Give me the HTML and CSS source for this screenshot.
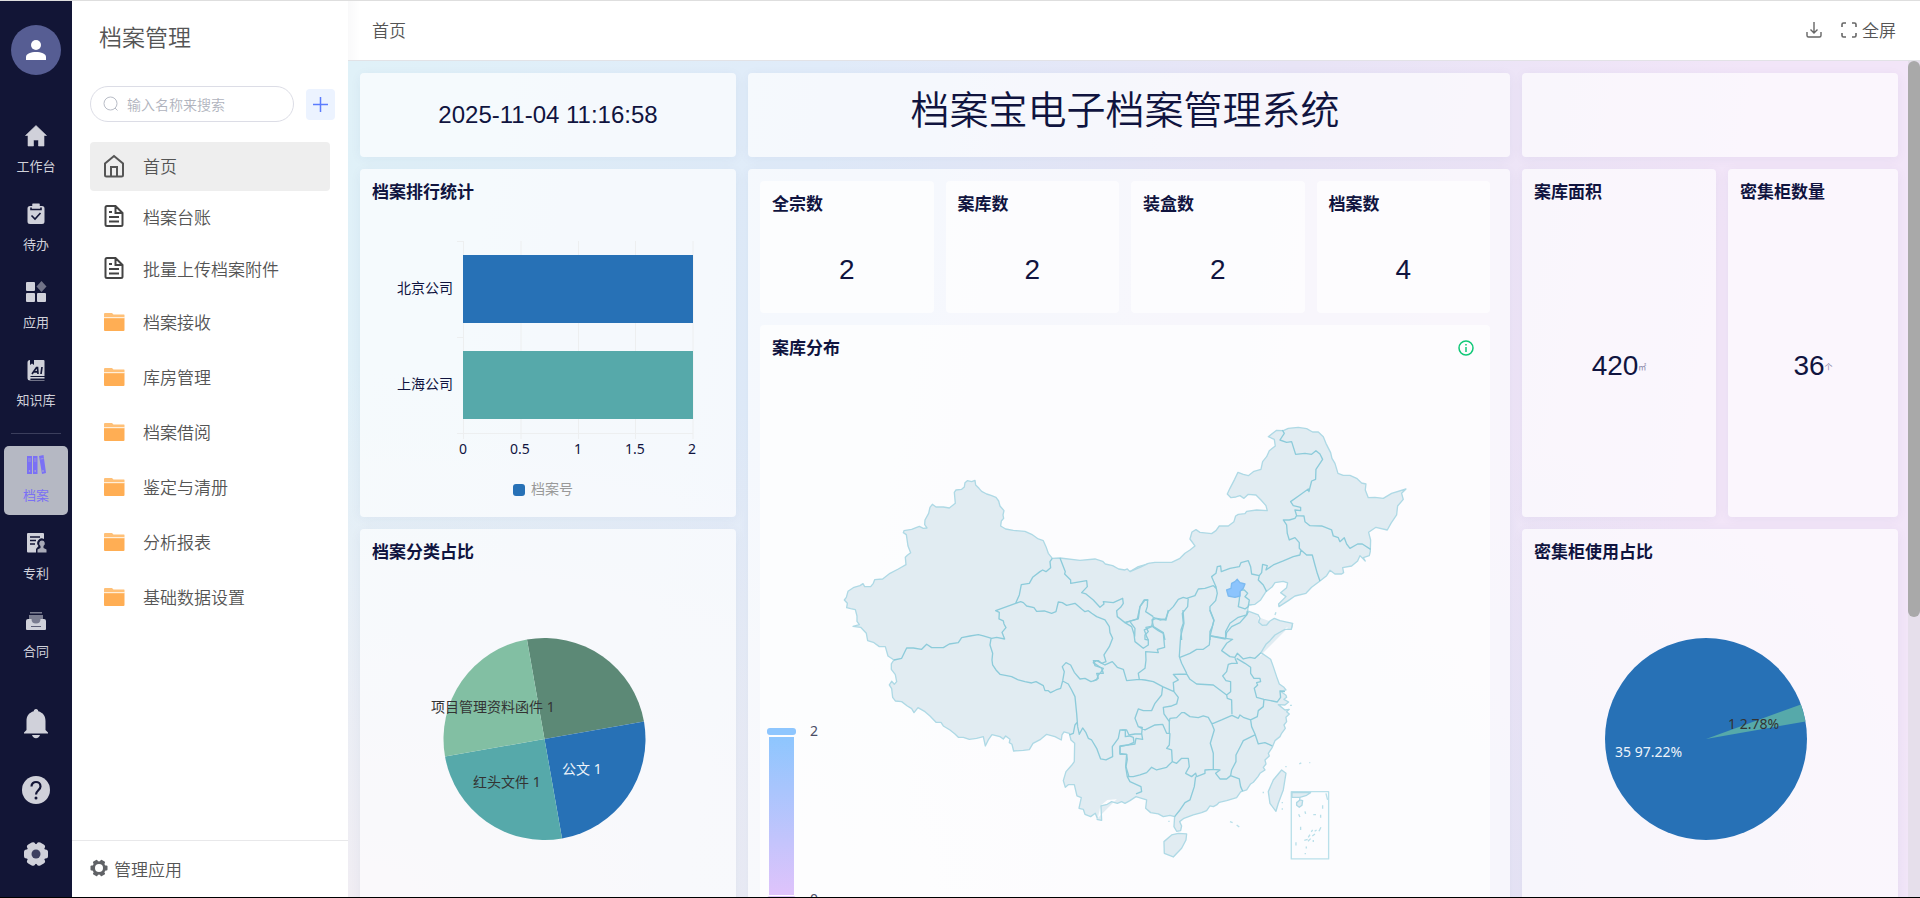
FILE: index.html
```html
<!DOCTYPE html>
<html lang="zh-CN">
<head>
<meta charset="utf-8">
<meta name="viewport" content="width=device-width, initial-scale=1">
<title>档案管理</title>
<link rel="stylesheet" href="styles.css">
</head>
<body>
<div class="app">
  <nav class="rail" aria-label="应用导航">
    <button class="avatar" type="button" aria-label="个人中心">
      <svg width="20" height="20" viewBox="0 0 20 20" fill="#fff"><circle cx="10" cy="5" r="5"/><path d="M0 20v-3c0-3.500 5-5 10-5s10 1.500 10 5v3z"/></svg>
    </button>
    <div class="rail-group">
      <a class="rail-item" href="#"><svg width="22" height="22" viewBox="0 0 22 22" fill="currentColor"><path d="M11 0.500 21.500 10.500H19V21h-5.500v-6h-5v6H3V10.500H0.500z" stroke="currentColor" stroke-linejoin="round" stroke-width=".6"/></svg><span>工作台</span></a>
      <a class="rail-item" href="#"><svg width="22" height="22" viewBox="0 0 22 22" fill="currentColor"><path d="M7.500 0.500h7V3H17a2.500 2.500 0 0 1 2.500 2.500V18.500A2.500 2.500 0 0 1 17 21H5a2.500 2.500 0 0 1-2.500-2.500V5.500A2.500 2.500 0 0 1 5 3h2.500z"/><path d="M6 4.500V6.500h10V4.500M6.500 12.500l3.500 3.500 5.500-6" fill="none" stroke="#121536" stroke-width="1.600"/><path d="M7.500 1h7v4h-7z"/></svg><span>待办</span></a>
      <a class="rail-item" href="#"><svg width="22" height="22" viewBox="0 0 22 22" fill="currentColor"><rect x="1" y="1" width="9" height="9" rx="1"/><rect x="1" y="12" width="9" height="9" rx="1"/><rect x="12" y="12" width="9" height="9" rx="1"/><path d="m16.500 0 5 5.500-5 5.500-5-5.500z" opacity=".5"/></svg><span>应用</span></a>
      <a class="rail-item" href="#"><svg width="22" height="22" viewBox="0 0 22 22" fill="currentColor"><path d="M5 1v5l2-1.500L9 6V1h9.500a1 1 0 0 1 1 1v15H5.500v1h14v1.500H5.500a1.500 1.500 0 0 0 0 1.500h14v.5H5a2.500 2.500 0 0 1-2.500-2.500V3.500A2.500 2.500 0 0 1 5 1z"/><path d="m7 15 4.500-6.500h1l.5 6.500M9 12.800h3.500M17 8l-1 7" fill="none" stroke="#121536" stroke-width="1.700"/></svg><span>知识库</span></a>
    </div>
    <hr class="rail-line">
    <div class="rail-group">
      <a class="rail-item rail-item-active" href="#" aria-current="page"><svg width="22" height="22" viewBox="0 0 22 22" fill="currentColor"><path d="M2 2h5v18H2zM8 2h4.500v18H8zM14 2l4.500-1 2.500 18-4 1z"/><path d="M3 5h3M9 5h2.500M15.500 5l3-.5M3 7h3M9 7h2.500" stroke="#b5b8c3" stroke-width=".6"/><circle cx="4.500" cy="17" r=".8" fill="#b5b8c3"/><circle cx="10.200" cy="17" r=".8" fill="#b5b8c3"/><circle cx="18" cy="17" r=".8" fill="#b5b8c3"/></svg><span>档案</span></a>
      <a class="rail-item" href="#"><svg width="22" height="22" viewBox="0 0 22 22" fill="currentColor"><path d="M3 1h15a1 1 0 0 1 1 1v5a4.500 4.500 0 0 0-5.500 7L11 17v3.500H3a1 1 0 0 1-1-1V2a1 1 0 0 1 1-1z"/><path d="M5 5h10M5 8.500h6M5 12h5" stroke="#121536" stroke-width="1.500"/><path d="M17 8.500a3 3 0 0 1 1.500 5.500v2l3 1.500v3H12.500v-3l3-1.500v-2A3 3 0 0 1 17 8.500z" opacity=".8"/></svg><span>专利</span></a>
      <a class="rail-item" href="#"><svg width="22" height="22" viewBox="0 0 22 22" fill="currentColor"><path d="M5 2h12v1.500H5zM4 5h14v9H4z" opacity=".55"/><path d="M3 9h3.500c0 3 1.500 4.500 4.500 4.500s4.500-1.500 4.500-4.500H19a2 2 0 0 1 2 2v8a1 1 0 0 1-1 1H2a1 1 0 0 1-1-1v-8a2 2 0 0 1 2-2z"/><path d="M6 16.500h10" stroke="#121536" opacity=".6"/></svg><span>合同</span></a>
    </div>
    <div class="rail-tools">
      <button type="button" aria-label="通知"><svg width="26" height="30" viewBox="0 0 26 30" fill="currentColor"><path d="M13 0c1.500 0 2.200 1 2.200 2.200C20 3.500 22.500 7 22.500 12v9l2.500 2.500v1H1v-1L3.500 21v-9C3.500 7 6 3.500 10.800 2.200 10.800 1 11.500 0 13 0zM9 26h8c-.5 2-2 3.200-4 3.200S9.500 28 9 26z"/></svg></button>
      <button type="button" aria-label="帮助"><svg width="28" height="28" viewBox="0 0 28 28"><circle cx="14" cy="14" r="14" fill="currentColor"/><path d="M9.500 10.500c0-6 9-6 9 0 0 3.500-4.500 4-4.500 8" fill="none" stroke="#121536" stroke-width="2.200"/><circle cx="14" cy="22" r="1.500" fill="#121536"/></svg></button>
      <button type="button" aria-label="设置"><svg width="26" height="26" viewBox="0 0 26 26" fill="currentColor"><circle cx="13" cy="13" r="10"/><rect x="1" y="8.500" width="24" height="9" rx="2.500"/><rect x="1" y="8.500" width="24" height="9" rx="2.500" transform="rotate(60 13 13)"/><rect x="1" y="8.500" width="24" height="9" rx="2.500" transform="rotate(120 13 13)"/><circle cx="13" cy="13" r="4.500" fill="#3d4060"/></svg></button>
    </div>
  </nav>

  <aside class="side">
    <h1 class="side-title">档案管理</h1>
    <div class="side-search">
      <label class="search-box">
        <svg width="16" height="16" viewBox="0 0 16 16" fill="none" stroke="#b9bdc7"><circle cx="7.500" cy="7.500" r="6.500"/><path d="m12 12 2.500 2.500"/></svg>
        <input type="text" placeholder="输入名称来搜索" aria-label="输入名称来搜索">
      </label>
      <button class="add" type="button" aria-label="新增"><svg width="15" height="15" viewBox="0 0 15 15" stroke="#5b7cfd" stroke-width="1.500"><path d="M7.500 0v15M0 7.500h15"/></svg></button>
    </div>
    <ul class="menu">
      <li><a class="menu-item menu-active" href="#" aria-current="page"><svg width="22" height="24" viewBox="0 0 22 24" fill="none" stroke="#555" stroke-width="2"><path d="M2 9.500 11 2l9 7.500V21a1.500 1.500 0 0 1-1.500 1.500h-15A1.500 1.500 0 0 1 2 21zM8 22v-9h6v9"/></svg>首页</a></li>
      <li><a class="menu-item" href="#"><svg width="22" height="24" viewBox="0 0 22 24" fill="none" stroke="#444" stroke-width="2"><path d="M12.500 2H4a1.500 1.500 0 0 0-1.500 1.500v17A1.500 1.500 0 0 0 4 22h14a1.500 1.500 0 0 0 1.500-1.500V9zM12.500 2v7h7M6 8h3M6 13h10M6 17.500h10"/></svg>档案台账</a></li>
      <li><a class="menu-item" href="#"><svg width="22" height="24" viewBox="0 0 22 24" fill="none" stroke="#444" stroke-width="2"><path d="M12.500 2H4a1.500 1.500 0 0 0-1.500 1.500v17A1.500 1.500 0 0 0 4 22h14a1.500 1.500 0 0 0 1.500-1.500V9zM12.500 2v7h7M6 8h3M6 13h10M6 17.500h10"/></svg>批量上传档案附件</a></li>
      <li><a class="menu-item menu-folder" href="#"><svg width="22" height="20" viewBox="0 0 22 20"><path d="M1 5.500V2a1 1 0 0 1 1-1h7l1.500 1.500H21q.500 0 .500.500v2.500z" fill="#ffc077"/><path d="M1 6h20.500v12a1 1 0 0 1-1 1H2a1 1 0 0 1-1-1z" fill="#ffae54"/><path d="M1 5.700h20.500" stroke="#fff2e0"/></svg>档案接收</a></li>
      <li><a class="menu-item menu-folder" href="#"><svg width="22" height="20" viewBox="0 0 22 20"><path d="M1 5.500V2a1 1 0 0 1 1-1h7l1.500 1.500H21q.500 0 .500.500v2.500z" fill="#ffc077"/><path d="M1 6h20.500v12a1 1 0 0 1-1 1H2a1 1 0 0 1-1-1z" fill="#ffae54"/><path d="M1 5.700h20.500" stroke="#fff2e0"/></svg>库房管理</a></li>
      <li><a class="menu-item menu-folder" href="#"><svg width="22" height="20" viewBox="0 0 22 20"><path d="M1 5.500V2a1 1 0 0 1 1-1h7l1.500 1.500H21q.500 0 .500.500v2.500z" fill="#ffc077"/><path d="M1 6h20.500v12a1 1 0 0 1-1 1H2a1 1 0 0 1-1-1z" fill="#ffae54"/><path d="M1 5.700h20.500" stroke="#fff2e0"/></svg>档案借阅</a></li>
      <li><a class="menu-item menu-folder" href="#"><svg width="22" height="20" viewBox="0 0 22 20"><path d="M1 5.500V2a1 1 0 0 1 1-1h7l1.500 1.500H21q.500 0 .500.500v2.500z" fill="#ffc077"/><path d="M1 6h20.500v12a1 1 0 0 1-1 1H2a1 1 0 0 1-1-1z" fill="#ffae54"/><path d="M1 5.700h20.500" stroke="#fff2e0"/></svg>鉴定与清册</a></li>
      <li><a class="menu-item menu-folder" href="#"><svg width="22" height="20" viewBox="0 0 22 20"><path d="M1 5.500V2a1 1 0 0 1 1-1h7l1.500 1.500H21q.500 0 .500.500v2.500z" fill="#ffc077"/><path d="M1 6h20.500v12a1 1 0 0 1-1 1H2a1 1 0 0 1-1-1z" fill="#ffae54"/><path d="M1 5.700h20.500" stroke="#fff2e0"/></svg>分析报表</a></li>
      <li><a class="menu-item menu-folder" href="#"><svg width="22" height="20" viewBox="0 0 22 20"><path d="M1 5.500V2a1 1 0 0 1 1-1h7l1.500 1.500H21q.500 0 .500.500v2.500z" fill="#ffc077"/><path d="M1 6h20.500v12a1 1 0 0 1-1 1H2a1 1 0 0 1-1-1z" fill="#ffae54"/><path d="M1 5.700h20.500" stroke="#fff2e0"/></svg>基础数据设置</a></li>
    </ul>
    <button class="side-foot" type="button"><svg width="18" height="18" viewBox="0 0 18 18" fill="#606266"><circle cx="9" cy="9" r="6.800"/><rect x=".5" y="6.500" width="17" height="5" rx="1"/><rect x=".5" y="6.500" width="17" height="5" rx="1" transform="rotate(60 9 9)"/><rect x=".5" y="6.500" width="17" height="5" rx="1" transform="rotate(120 9 9)"/><circle cx="9" cy="9" r="4" fill="#fff"/></svg>管理应用</button>
  </aside>

  <main class="main">
    <header class="topbar">
      <span class="crumb">首页</span>
      <div class="top-tools">
        <button type="button" aria-label="下载"><svg width="16" height="16" viewBox="0 0 16 16" fill="none" stroke="#666" stroke-width="1.400"><path d="M8 0v11M4.500 7.500 8 11l3.500-3.500M1 10v3.500q0 1.500 1.500 1.500h11q1.500 0 1.500-1.500V10"/></svg></button>
        <button type="button"><svg width="16" height="16" viewBox="0 0 16 16" fill="none" stroke="#666" stroke-width="1.600"><path d="M1 5V2.500Q1 1 2.500 1H5M11 1h2.500Q15 1 15 2.500V5M15 11v2.500q0 1.500-1.500 1.500H11M5 15H2.500Q1 15 1 13.500V11"/></svg>全屏</button>
      </div>
    </header>
    <div class="viewport">
      <div class="board">
        <section class="card center"><time class="clock" datetime="2025-11-04T11:16:58">2025-11-04 11:16:58</time></section>
        <section class="card banner"><h2>档案宝电子档案管理系统</h2></section>
        <section class="card"></section>

        <section class="card">
          <h3>档案排行统计</h3>
          <svg class="chart" viewBox="360 215 376 302" role="img" aria-label="档案排行统计">
            <path d="M463.500 241v198M521 241v198M578.500 241v198M635.500 241v198M693 241v198M457 241.500h6.500M457 337.500h6.500M457 433.500h236" fill="none" stroke="#edeff0"/>
            <rect x="463" y="255" width="230" height="68" fill="#2771b6"/>
            <rect x="463" y="351" width="230" height="68" fill="#56a9aa"/>
            <g class="axis" text-anchor="end"><text x="453" y="293">北京公司</text><text x="453" y="389">上海公司</text></g>
            <g class="axis" text-anchor="middle"><text x="463" y="454">0</text><text x="520" y="454">0.5</text><text x="578" y="454">1</text><text x="635" y="454">1.5</text><text x="692" y="454">2</text></g>
            <rect x="513" y="484" width="12" height="12" rx="3" fill="#2771b6"/>
            <text class="legend" x="531" y="494">档案号</text>
          </svg>
        </section>

        <section class="card middle">
          <div class="stats">
            <div class="card stat"><h3>全宗数</h3><p class="number">2</p></div>
            <div class="card stat"><h3>案库数</h3><p class="number">2</p></div>
            <div class="card stat"><h3>装盒数</h3><p class="number">2</p></div>
            <div class="card stat"><h3>档案数</h3><p class="number">4</p></div>
          </div>
          <div class="card map-card">
            <div class="map-head">
              <h3>案库分布</h3>
              <button type="button" aria-label="说明"><svg width="16" height="16" viewBox="0 0 16 16" fill="none" stroke="#10c877" stroke-width="1.500"><circle cx="8" cy="8" r="7"/><path d="M8 7v5M8 4v1.500"/></svg></button>
            </div>
            <svg class="chart" viewBox="760 371 730 537" role="img" aria-label="案库分布">
              <defs><linearGradient id="scale" x1="0" y1="0" x2="0" y2="1"><stop offset="0" stop-color="#8ec6fe"/><stop offset="1" stop-color="#dfc3fb"/></linearGradient></defs>
              <g transform="translate(830 420) scale(.3333)" stroke-linejoin="round">
                <path class="fill" d="M806 1190 811 1162 700 850 900 470 960 445 1200 480 1280 550 1255 560 1253 575 1283 588 1290 608 1300 618 1333 597 1380 615 1335 648 1293 695 1200 1000 1000 1125 832 1140 813 1156z"/>
                <path class="land" d="M960 430 925 440 900 455 892 447 885 450 866 447 848 437 826 432 818 424 795 417 750 421 690 414 667 415 655 400 648 380 640 362 625 357 605 343 585 334 550 331 527 327 512 318 514 303 521 295 519 285 522 272 510 258 506 243 498 232 483 226 470 222 455 214 447 205 437 195 435 181 425 185 412 182 405 188 403 201 395 208 378 210 373 217 376 250 358 264 340 261 318 261 307 253 300 262 296 280 285 300 284 314 291 324 280 325 268 319 245 328 222 332 220 338 229 344 234 378 242 398 232 406 226 412 228 434 205 447 180 460 158 477 134 479 130 490 122 500 104 500 99 491 90 497 72 502 54 514 49 532 43 540 52 550 50 563 62 566 76 569 81 588 81 604 88 614 69 619 92 622 109 640 113 662 130 667 148 680 166 680 174 708 192 720 184 732 184 748 196 764 200 785 193 793 185 784 178 795 185 806 188 832 196 843 215 845 232 858 245 866 252 878 264 863 285 875 300 888 318 907 333 907 340 918 360 930 375 942 385 952 400 952 418 958 440 955 460 950 466 978 476 958 486 944 510 950 520 957 527 948 540 958 538 968 546 973 551 993 580 991 598 989 609 970 632 958 650 943 675 950 694 960 696 945 702 936 718 940 723 960 734 970 733 1025 725 1036 708 1055 700 1082 706 1102 715 1094 733 1094 741 1128 754 1133 747 1165 760 1168 765 1183 782 1190 796 1180 803 1198"/>
                <g transform="translate(900 -30)">
                  <path class="land" d="M0 485 30 472 55 460 75 457 125 457 150 445 165 430 180 420 195 408 180 387 186 366 198 359 210 367 245 371 258 362 268 348 295 348 312 335 317 318 325 313 345 311 350 304 380 300 412 302 408 287 393 270 378 255 355 253 342 265 330 257 318 261 303 263 292 252 300 235 314 208 324 187 340 193 355 197 372 184 393 178 398 155 410 140 418 122 436 108 433 88 415 80 440 61 460 62 475 55 505 52 530 56 548 66 565 66 580 80 588 100 602 128 606 145 615 160 624 190 640 196 660 196 680 205 695 219 708 222 706 240 715 263 735 262 760 265 785 250 828 237 815 250 820 268 803 288 800 315 783 340 772 360 738 352 716 367 722 390 721 425 718 437 700 443 706 453 690 437 683 453 665 468 638 473 641 488 635 492 615 492 600 481 590 497 570 513 545 532 528 550 495 558 475 572 447 590 446 582 468 560 452 548 470 533 473 519 460 514 435 518 427 530 408 545 392 570 375 583 355 585 353 603 385 615 390 625 386 637 397 646 410 645 420 633 433 625 450 632 488 640 484 657"/>
                </g>
                <g transform="translate(600 570)">
                  <path class="land" d="M788 40 784 58 765 58 735 75 720 92 708 103 693 128 722 148 730 170 740 200 748 222 762 232 768 240 752 244 768 256 770 262 762 268 776 276 765 285 745 284 765 300 778 298 770 305 778 312 768 322 770 335 762 345 766 355 755 370 750 380 735 392 727 412 715 430 718 438 705 450 708 462 700 472 705 480 690 490 684 500 670 517 662 522 650 540 632 546 620 563 590 572 568 577 560 585 550 590 540 588 530 602 515 608 490 615 462 625 449 635 455 648 452 662 440 664 432 650 434 620 420 616 400 620 385 612 362 608 347 595 350 570 335 565 318 560 300 572 285 580 275 575 262 580 245 575 232 583 213 588 215 631 200 628"/>
                  <path class="land" d="M470 672 468 690 455 715 430 741 403 730 402 695 425 675 445 670zM755 480 768 490 760 540 745 580 738 604 720 580 715 545 730 510z"/>
                </g>
                <path class="line" d="M667 415 660 425 662 443 648 455 638 450 630 455 608 472 598 490 574 494 568 525 557 550 497 572 508 577 507 597 520 603 522 612 528 623 516 637 524 657 500 652 485 655 460 648 445 644 420 648 395 653 385 668 358 672 340 683 305 683 290 673 275 688 250 684 230 684 215 715 192 720M557 550 572 545 580 548 590 558 612 563 620 574 643 573 665 580 678 575 685 546 697 548 710 556 735 550 755 567 765 575 775 572 785 580 800 590 825 600 838 620 840 638 848 655 838 680 822 705 828 725 815 730 805 722 790 722 795 737 820 745 812 758 805 765 800 780 783 785 765 775 750 777 733 757 722 735 708 728 697 740 703 755 698 783M483 657 480 675 488 700 486 720 488 735 498 750 510 763 530 767 545 770 565 780 585 785 605 789 618 785 640 797 645 812 655 812 662 818 678 810 692 805 698 783 715 792 725 810 735 830 740 880 743 920M743 905 735 915 730 940 718 945M743 920 748 943 758 924 768 938 775 955 785 960 800 985 812 1017 828 1020 848 1010 847 980 865 955 870 930 886 930 886 950 898 948 910 952 912 967 895 975 870 980 870 1003 890 1003 892 1018 888 1040 897 1070M690 414 706 455 704 462 722 480 722 490 770 482 772 500 755 518 768 522 790 540 810 562 822 552 820 545 850 548 878 535 880 550 872 562 860 572 862 590 885 608 925 597 930 560 945 540 955 540"/>
                <g class="line" transform="translate(900 -30)">
                  <path d="M-15 638 22 627 30 590 42 570 53 570 52 590 47 605 70 620M0 635 15 655 14 680M70 622 65 650 43 660 50 680 55 690M68 648 100 668 105 690M175 562 173 590 157 610 160 640 153 660 155 690M70 622 90 630 107 627 115 605 130 590 145 568 160 562 170 565 195 557 205 537 225 535 250 527 258 535M258 530 262 550 257 572 240 590 240 602 252 632 247 650 240 665 240 690M258 530 245 500 258 490 262 470 272 468 274 485 300 475 328 470 333 458 355 452 362 470 365 492 388 497 395 488 398 463 412 467 408 480 430 465 460 453 490 440 510 435 513 420 530 435 547 435 555 465 562 490 570 513M388 497 385 510 400 525 410 545M352 603 350 615 325 622 300 640 287 665 287 685 240 677M330 545 328 570 325 590 345 597 355 590 358 570 345 560 353 550 343 540 330 540M513 420 508 415 508 398 495 383 478 390 472 370 470 345 460 330 478 330 495 325 500 317 522 318 525 335 540 347 575 348 605 360 610 378 625 383 630 395 643 383 650 402 660 415 683 402 697 402 722 418M500 317 495 300 512 302 512 292 490 287 482 275 510 255 535 237 537 245 545 213 557 208 558 178 578 148 570 132 558 122 545 133 525 130 497 133 485 95 470 97 450 90 463 70 457 60"/>
                  <path class="hot" d="m322 508 8 10 15 4-5 13-10 10v13l-15 4-20-4-5-18 13-5 2-15 10-5z"/>
                </g>
                <path class="line" transform="translate(600 570)" d="M285 38 305 50 312 72 315 95 340 115 355 105 355 90 345 88 345 75 355 65 348 52 370 48 366 30 380 25 408 30 415 0M368 50 385 62 400 70 404 112 382 118 385 128 347 125 348 150 345 175 325 190 328 208M459 0 462 40 452 80 448 140 455 160 470 190M540 0 552 30 541 75 538 105 520 118 500 118 480 130 450 142M587 85 608 88 590 100 575 122 600 140 615 142 622 130 640 147 660 142 675 145 693 128M587 85 590 68 605 50 630 38 650 15 655 5M541 78 587 87M615 145 622 160 605 160 595 163 590 185 578 198 588 212 602 215 602 245 590 255 570 240 550 225 500 222 480 208 470 192 430 193 445 210 430 218 432 245 445 262 440 282 425 288 400 292 402 312 418 335 420 325 440 323 455 308 463 308 480 320 505 323 520 318 535 322 545 340 550 340 575 330 606 316M590 255 592 265 605 270 606 313M620 145 645 160 662 172 662 190 672 205 690 205 692 215 680 218 683 225 673 235 680 262 702 268 742 276 752 262 750 243 765 245M702 268 700 290 685 302 682 320 662 330 640 322 630 315 625 325 606 316M662 330 665 350 675 372 685 402 705 398 727 408M675 375 640 392 632 408 618 435 618 455 605 480 602 497 628 507 632 530 638 543M602 497 590 507 570 507 557 490 570 480 550 478 550 430 541 400 553 360 545 340M432 245 398 230 370 215 345 210 328 208 290 212 280 178 262 172 247 155 225 165 200 152 190 158 215 175 220 190 200 190 205 205 190 213M398 230 395 255 375 280 365 302 340 302 325 297 315 325 325 350 345 360 375 345 398 343 410 370 418 370 418 335M325 350 337 352 335 372 315 372 297 375 290 360 275 360M420 370 418 405 410 415 425 420 427 455 410 472 380 480 365 472 350 488 330 495 310 500 292 500 287 470 290 433 270 430 270 408 315 402 318 385 338 388 335 370M292 500 300 515 333 530 335 545 318 552M427 455 440 460 455 445 475 445 478 470 467 490 485 500 497 490 500 500 525 490 525 480 550 478M497 500 493 530 480 570 465 578 450 600 434 620"/>
                <g transform="translate(600 570)">
                  <rect class="inset" x="784" y="545" width="112" height="202"/>
                  <path class="land" d="m786 547 56 1-12 8-20 6h-24zM800 578l10-8 8 2-2 14-8 6-8-6zM810 562l-1 8"/>
                  <path class="isles" d="M878 586v10M872 614v9M806 613l4 8M812 650v10M873 652l-6 12M848 660l-4 6M855 672l-8 6M840 674l-5 8M833 688l-10 3M850 690v6M842 686l-8 8M798 697v10M829 710v6M826 729v4M860 660l-6 4M825 604l2 8M850 614h8M888 550l5 20M600 635l8 3M620 645l8 6M755 597h4M755 578h4M700 545v5M808 462l6-3M838 458h3M415 634h4M735 15l3-8M766 470h4M780 286h6"/>
                </g>
              </g>
              <rect x="767" y="728" width="29" height="7" rx="3" fill="#8ec6fe"/>
              <rect x="769" y="737" width="25" height="158" fill="url(#scale)"/>
              <rect x="767" y="896" width="29" height="7" rx="3" fill="#dfc3fb"/>
              <text class="tick" x="810" y="736">2</text><text class="tick" x="810" y="904">0</text>
            </svg>
          </div>
        </section>

        <div class="pair">
          <section class="card stat area"><h3>案库面积</h3><p class="number">420<small>㎡</small></p></section>
          <section class="card stat cabinets"><h3>密集柜数量</h3><p class="number">36<small>个</small></p></section>
        </div>

        <section class="card">
          <h3>档案分类占比</h3>
          <svg class="chart" viewBox="360 575 376 328" role="img" aria-label="档案分类占比">
            <path d="M544.500 739 526.960 639.530A101 101 0 0 1 643.970 721.460z" fill="#5c8976"/>
            <path d="M544.500 739 643.970 721.460A101 101 0 0 1 562.040 838.470z" fill="#2771b6"/>
            <path d="M544.500 739 562.040 838.470A101 101 0 0 1 445.030 756.540z" fill="#56a9aa"/>
            <path d="M544.500 739 445.030 756.540A101 101 0 0 1 526.960 639.530z" fill="#82bfa3"/>
            <text class="pie-dark" x="431" y="712">项目管理资料函件 1</text>
            <text class="pie-light" x="562" y="774">公文 1</text>
            <text class="pie-dark" x="473" y="787">红头文件 1</text>
          </svg>
        </section>

        <section class="card">
          <h3>密集柜使用占比</h3>
          <svg class="chart" viewBox="1522 575 376 328" role="img" aria-label="密集柜使用占比">
            <circle cx="1706" cy="739" r="101" fill="#2771b6"/>
            <path d="M1706 739 1800.910 704.460A101 101 0 0 1 1805.470 721.460z" fill="#56a9aa"/>
            <text class="pie-dark" x="1728" y="729">1 2.78%</text>
            <text class="pie-light" x="1615" y="757">35 97.22%</text>
          </svg>
        </section>
      </div>
      <div class="scroll-track" aria-hidden="true"><div class="scroll-thumb"></div></div>
    </div>
  </main>
</div>
</body>
</html>
```
FILE: styles.css
```css
* { box-sizing: border-box; }

body {
  margin: 0;
  font-family: "Noto Sans", "Noto Sans CJK SC", sans-serif;
  font-weight: 350;
  color: #555;
}

h1, h2, h3, p, ul { margin: 0; padding: 0; }
ul { list-style: none; }
a { color: inherit; text-decoration: none; }
button { padding: 0; border: 0; background: none; font: inherit; color: inherit; }
svg { display: block; flex: none; }

.app {
  display: flex;
  height: 100vh;
  overflow: hidden;
  border-top: 1px solid #dedede;
  border-bottom: 1px solid #000;
}

/* Rail */
.rail {
  display: flex;
  flex: none;
  flex-direction: column;
  align-items: center;
  width: 72px;
  padding-top: 24px;
  background: #121536;
  color: #d0d1da;
}
.avatar {
  display: grid;
  place-items: center;
  width: 50px;
  height: 50px;
  margin-bottom: 42px;
  border-radius: 50%;
  background: #565d93;
}
.rail-group { display: flex; flex-direction: column; gap: 9px; }
.rail-item {
  display: flex;
  flex-direction: column;
  align-items: center;
  gap: 9px;
  width: 64px;
  height: 69px;
  padding-top: 8px;
  border-radius: 5px;
  font-size: 13px;
  font-weight: 400;
  line-height: 20px;
}
.rail-item-active { background: #b5b8c3; color: #7a70f5; }
.rail-line { width: 50px; margin: 13px 0 12px; border: 0; border-top: 1px solid #3b3e5c; }
.rail-tools {
  display: flex;
  flex: 1;
  flex-direction: column;
  align-items: center;
  justify-content: flex-end;
  gap: 37px;
  padding-bottom: 30px;
}

/* Sidebar */
.side {
  display: flex;
  flex: none;
  flex-direction: column;
  width: 276px;
  background: #fff;
  font-size: 17px;
}
.side-title { padding: 20px 27px 0; font-size: 23px; font-weight: 350; line-height: 32px; }
.side-search { display: flex; align-items: center; gap: 12px; margin: 33px 13px 20px 18px; }
.search-box {
  display: flex;
  flex: 1;
  align-items: center;
  gap: 8px;
  min-width: 0;
  height: 36px;
  padding: 0 12px;
  border: 1px solid #dcdde6;
  border-radius: 18px;
}
.search-box input {
  flex: 1;
  min-width: 0;
  padding: 0;
  border: 0;
  outline: 0;
  background: none;
  font: inherit;
  font-size: 14px;
}
.search-box input::placeholder { color: #b0b3bd; }
.add { display: grid; place-items: center; width: 29px; height: 31px; border-radius: 4px; background: #ecf3ff; }
.menu { flex: 1; padding: 0 18px; }
.menu-item {
  display: flex;
  align-items: center;
  gap: 18px;
  height: 52px;
  padding: 0 0 2px 13px;
  border-radius: 4px;
}
.menu-active { height: 49px; background: #eee; }
.menu-folder { height: 55px; }
.side-foot {
  display: flex;
  align-items: center;
  gap: 6px;
  height: 57px;
  padding: 0 0 2px 18px;
  border-top: 1px solid #e8e8ea;
}

/* Main */
.main { display: flex; flex: 1; flex-direction: column; min-width: 0; }
.topbar {
  display: flex;
  flex: none;
  align-items: center;
  justify-content: space-between;
  height: 60px;
  padding: 0 24px 2px;
  border-bottom: 1px solid #e2e2e6;
  background: linear-gradient(to right, #f9f9fa, #fff 12px);
  font-size: 17px;
}
.top-tools { display: flex; gap: 19px; }
.top-tools button { display: flex; align-items: center; gap: 5px; }
.viewport {
  display: flex;
  flex: 1;
  align-items: flex-start;
  min-height: 0;
  overflow: hidden;
  background:
    radial-gradient(ellipse at 0 100%, #f0edf3, transparent 45%),
    radial-gradient(ellipse at 65% 100%, #e4e4f5, transparent 40%),
    linear-gradient(100deg, #e0f1f8, #e0ebf9 28%, #e8e4f6 55%, #f2e5f8 82%);
}
.board {
  display: grid;
  flex: 1;
  grid-template-rows: auto auto 1fr;
  grid-template-columns: 376fr 762fr 376fr;
  gap: 12px;
  min-width: 0;
  padding: 12px 10px 12px 12px;
}
.card {
  border-radius: 4px;
  background: rgba(255, 255, 255, .66);
  box-shadow: 0 2px 12px rgba(40, 50, 110, .05);
}
.card h3 { padding: 12px 12px; color: #10143f; font-size: 17px; font-weight: 700; line-height: 22px; }
.center { display: grid; place-items: center; height: 84px; }
.clock { color: #10143f; font-family: "Liberation Sans", sans-serif; font-size: 24px; font-weight: 400; }
.banner { padding: 7px 8px 0 0; text-align: center; }
.banner h2 { color: #10143f; font-size: 39px; font-weight: 350; line-height: 58px; }
.middle { grid-row: 2 / span 2; grid-column: 2; padding: 12px 20px 12px 12px; }
.stats { display: grid; grid-template-columns: repeat(4, 1fr); gap: 12px; margin-bottom: 12px; }
.middle .card { box-shadow: none; }
.stat { display: flex; flex-direction: column; min-height: 132px; }
.number {
  display: flex;
  flex: 1;
  align-items: center;
  justify-content: center;
  color: #10143f;
  font-family: "Liberation Sans", "Noto Sans CJK SC", sans-serif;
  font-size: 28px;
  font-weight: 400;
}
.number small { color: #8785a6; font-size: 8px; }
.pair { display: flex; gap: 12px; }
.area { flex: 194; }
.cabinets { flex: 170; }
.map-head { display: flex; align-items: center; justify-content: space-between; padding-right: 16px; }

/* Charts */
.chart { width: 100%; height: auto; font-size: 14px; font-weight: 400; }
.axis { fill: #10143f; }
.legend { fill: #999; }
.tick { fill: #4a4d66; }
.pie-dark { fill: #333; }
.pie-light { fill: #eef4fa; }
.fill { fill: #e1ecf2; }
.land { fill: #e1ecf2; stroke: #aed9e5; stroke-width: 4; }
.line { fill: none; stroke: #8ccbda; stroke-width: 4; }
.hot { fill: #8cc4fd; stroke: #7cbaf0; }
.inset { fill: none; stroke: #b9e0ea; stroke-width: 4; }
.isles { fill: none; stroke: #b9dfe9; stroke-width: 4; }

.scroll-track { flex: none; align-self: stretch; width: 12px; background: #e6dfeb; }
.scroll-thumb { height: 66.5%; border-radius: 6px; background: #a9a9a9; }
```
